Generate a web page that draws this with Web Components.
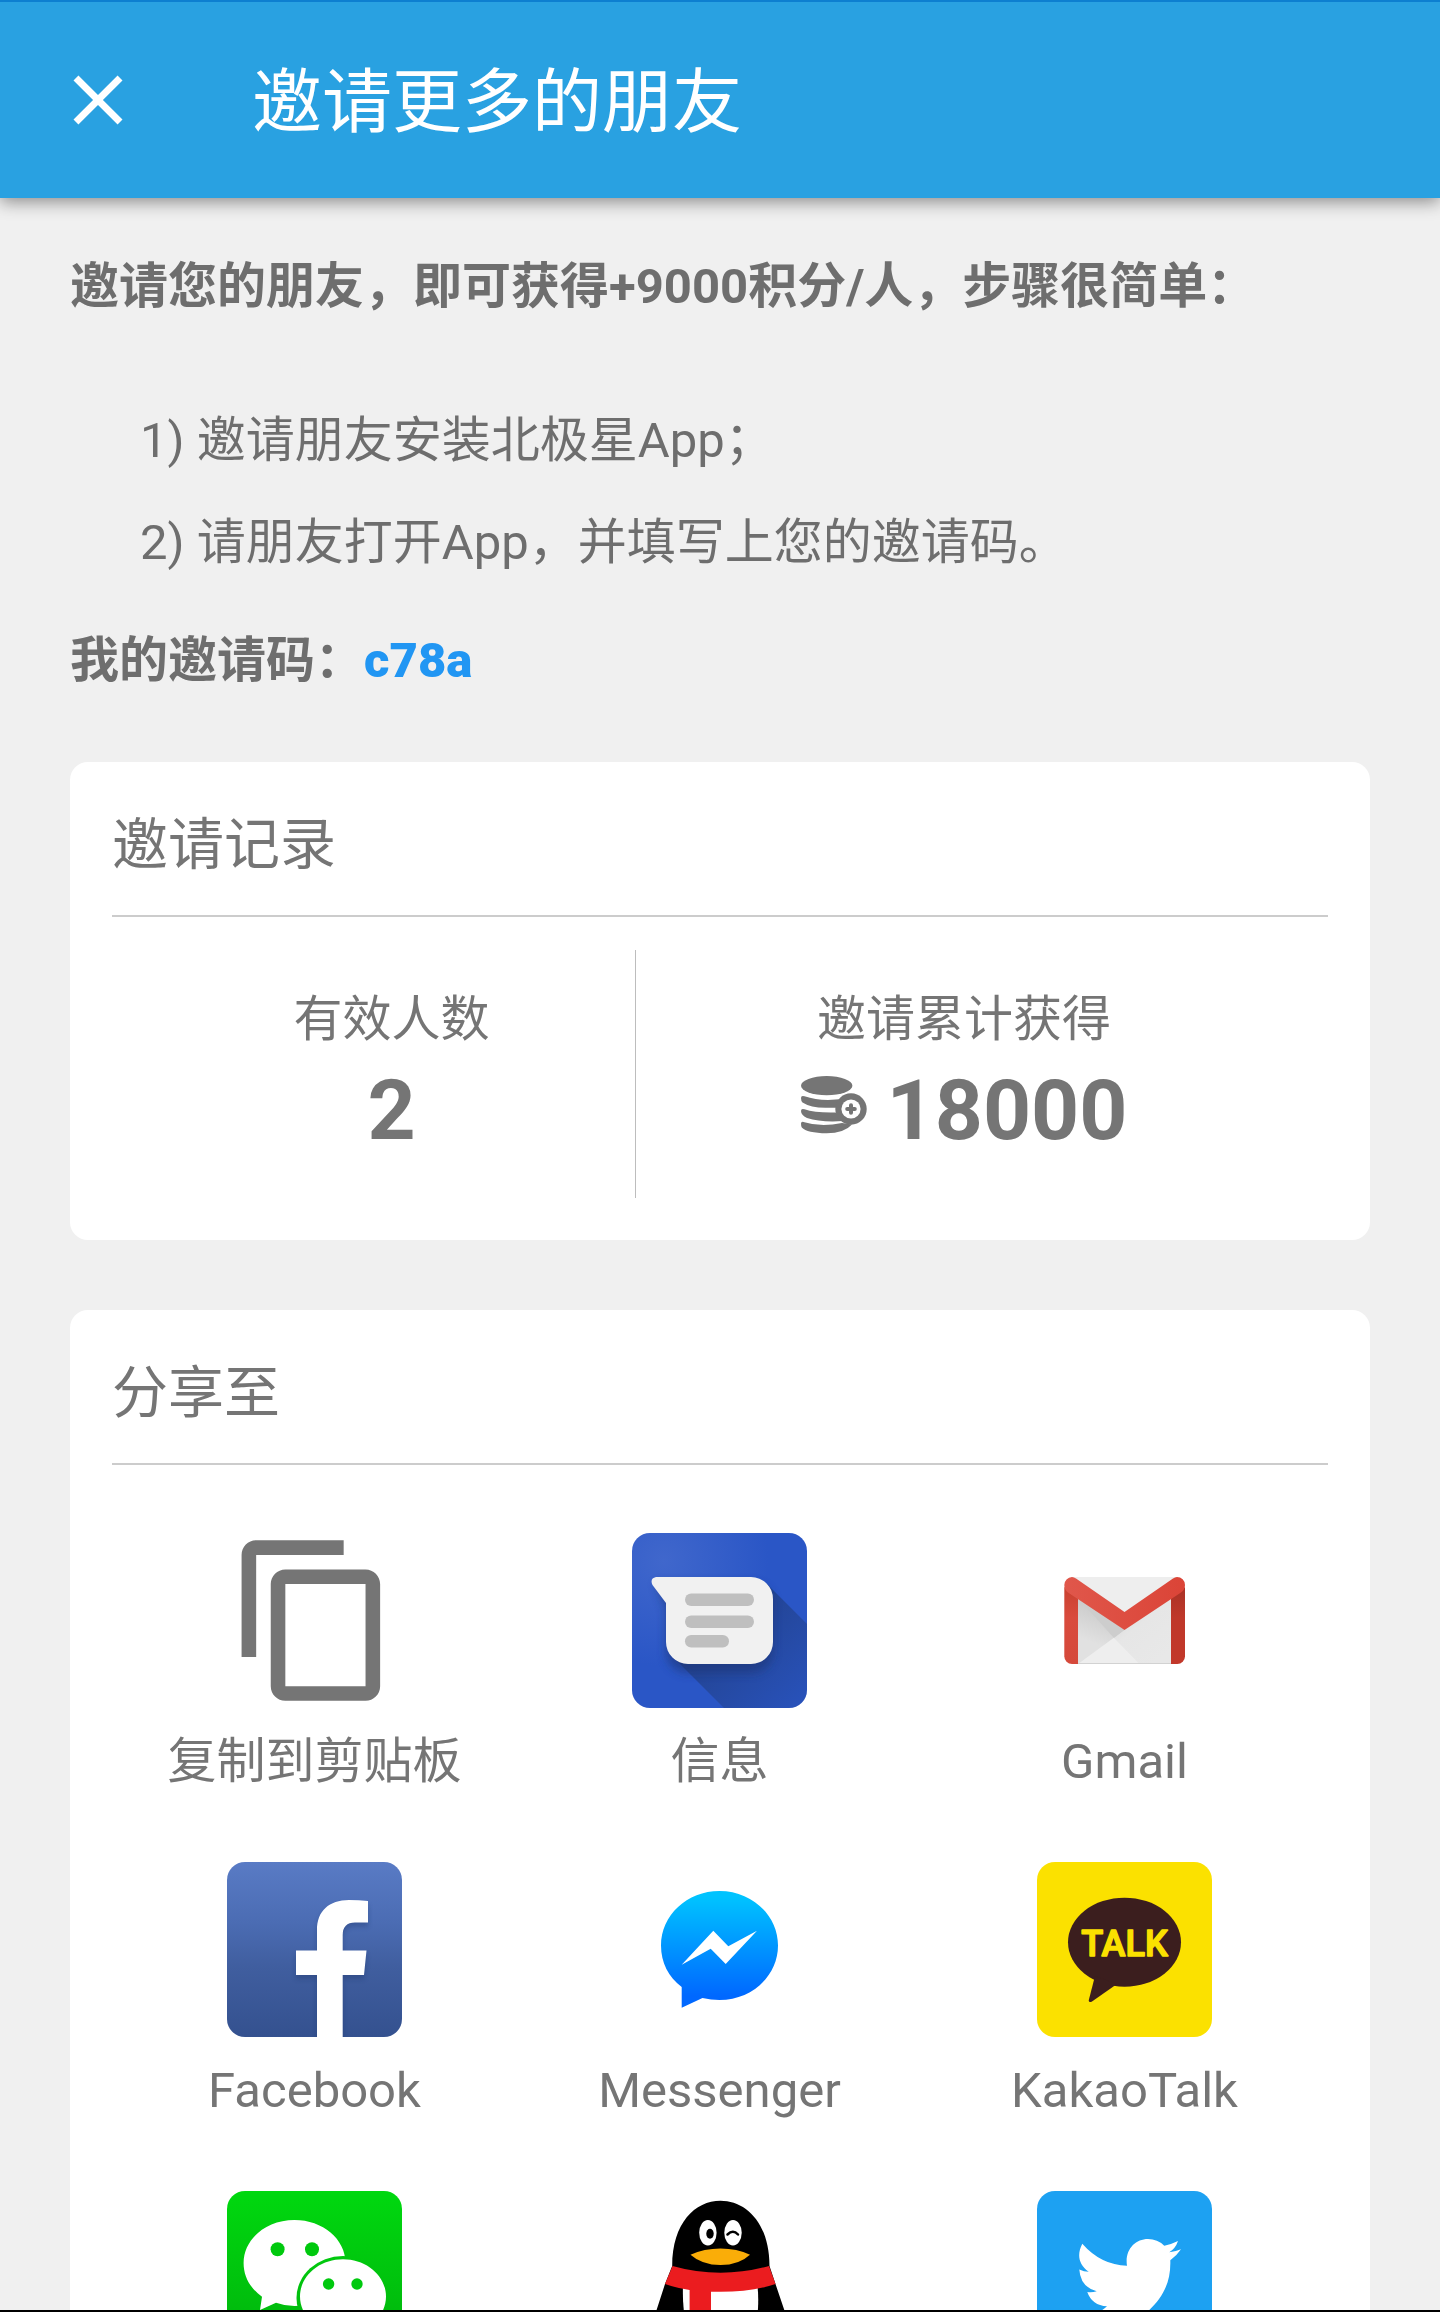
<!DOCTYPE html>
<html lang="zh-CN">
<head>
<meta charset="utf-8">
<meta name="viewport" content="width=device-width, initial-scale=1">
<title>邀请更多的朋友</title>
<style>
  :root {
    --bar: #29a1e1;
    --page: #f0f0f0;
    --text: #757575;
    --rule: #cccccc;
    --accent: #2196f3;
  }
  body {
    margin: 0;
    background: var(--page);
    color: var(--text);
    font-family: Roboto, "Noto Sans CJK SC", sans-serif;
    font-size: 49px;
    line-height: 58px;
  }
</style>
</head>
<body>
<invite-page>
  <app-bar slot="bar">邀请更多的朋友</app-bar>
  <invite-guide>
    <span slot="intro">邀请您的朋友，即可获得+9000积分/人，步骤很简单：</span>
    <span slot="step1">1) 邀请朋友安装北极星App；</span>
    <span slot="step2">2) 请朋友打开App，并填写上您的邀请码。</span>
    <span slot="label">我的邀请码：</span>
    <span slot="code">c78a</span>
  </invite-guide>
  <info-card>
    <span slot="title">邀请记录</span>
    <stat-row>
      <stat-item slot="first" label="有效人数">2</stat-item>
      <stat-item slot="second" label="邀请累计获得" coins>18000</stat-item>
    </stat-row>
  </info-card>
  <info-card>
    <span slot="title">分享至</span>
    <share-grid>
      <share-item icon="copy">复制到剪贴板</share-item>
      <share-item icon="messages">信息</share-item>
      <share-item icon="gmail">Gmail</share-item>
      <share-item icon="facebook">Facebook</share-item>
      <share-item icon="messenger">Messenger</share-item>
      <share-item icon="kakao">KakaoTalk</share-item>
      <share-item icon="wechat" name="微信"></share-item>
      <share-item icon="qq" name="QQ"></share-item>
      <share-item icon="twitter" name="Twitter"></share-item>
    </share-grid>
  </info-card>
</invite-page>

<script>
const define = (tag, render) => customElements.define(tag, class extends HTMLElement {
  constructor() {
    super();
    this.attachShadow({ mode: 'open' });
  }
  connectedCallback() {
    this.shadowRoot.innerHTML = render(this);
  }
});

const icons = {
  copy: `<svg viewBox="0 0 24 24"><path fill="#757575" d="M16 1H4c-1.1 0-2 .9-2 2v14h2V3h12V1zm3 4H8c-1.1 0-2 .9-2 2v14c0 1.100.9 2 2 2h11c1.100 0 2-.9 2-2V7c0-1.100-.9-2-2-2zm0 16H8V7h11v14z"/></svg>`,

  messages: `<svg viewBox="0 0 175 175">
    <defs>
      <radialGradient id="sky" cx=".18" cy=".16" r=".6"><stop offset="0" stop-color="#4067cc"/><stop offset="1" stop-color="#2a56c6"/></radialGradient>
      <linearGradient id="cast" x1="0" y1="0" x2="1" y2="1"><stop offset=".3" stop-color="#213f85" stop-opacity=".85"/><stop offset="1" stop-color="#213f85" stop-opacity=".15"/></linearGradient>
      <clipPath id="tile"><rect width="175" height="175" rx="18"/></clipPath>
      <filter id="soft" x="-20%" y="-20%" width="140%" height="150%"><feGaussianBlur stdDeviation="5"/></filter>
    </defs>
    <g clip-path="url(#tile)">
      <rect width="175" height="175" fill="url(#sky)"/>
      <path d="M135 51 175 91V175H92L41 124Z" fill="url(#cast)"/>
      <path d="M24 50H119a22 22 0 0 1 22 22v46a22 22 0 0 1-22 22H56a22 22 0 0 1-22-22V76Z" fill="#1b3576" opacity=".6" filter="url(#soft)"/>
      <path d="M24 44H119a22 22 0 0 1 22 22v43a22 22 0 0 1-22 22H56a22 22 0 0 1-22-22V70L20.500 52Q17.500 45.500 24 44Z" fill="#f1f1f1"/>
      <g fill="#bfbfbf"><rect x="53" y="60.500" width="69" height="12.500" rx="6.200"/><rect x="53" y="82.500" width="69" height="12.500" rx="6.200"/><rect x="53" y="102" width="44" height="12.500" rx="6.200"/></g>
    </g></svg>`,

  gmail: `<svg viewBox="0 0 175 175">
    <defs>
      <linearGradient id="left" x1="0" y1="0" x2="0" y2="1"><stop offset="0" stop-color="#c9402f"/><stop offset=".4" stop-color="#d94b3d"/><stop offset="1" stop-color="#d5493b"/></linearGradient>
      <linearGradient id="right" x1="0" y1="0" x2="0" y2="1"><stop offset="0" stop-color="#a93226"/><stop offset=".4" stop-color="#bf382a"/><stop offset="1" stop-color="#c2382a"/></linearGradient>
      <linearGradient id="flap" x1="0" y1="0" x2="1" y2="0"><stop offset="0" stop-color="#e0574b"/><stop offset="1" stop-color="#db4437"/></linearGradient>
      <linearGradient id="fold" x1=".6" y1="0" x2=".3" y2="1"><stop offset="0" stop-color="#c4c4c4"/><stop offset=".7" stop-color="#e1e1e1"/></linearGradient>
      <linearGradient id="shade" x1="0" y1="0" x2=".7" y2="1"><stop offset="0" stop-color="#d4d4d4"/><stop offset=".5" stop-color="#e6e6e6"/><stop offset="1" stop-color="#e8e8e8"/></linearGradient>
    </defs>
    <rect x="34" y="44" width="107" height="87" fill="#eeeeee"/>
    <path d="M41 65V131L87.500 97Z" fill="url(#fold)"/>
    <path d="M77 105 134 62V131H102.500Z" fill="url(#shade)"/>
    <path d="M41 65 77 105 87.500 97Z" fill="#cdcdcd"/>
    <path d="M41 130.500H134" stroke="#d2d2d2"/>
    <path d="M27.300 54 41 65V131H35a7.700 7.700 0 0 1-7.700-7.700Z" fill="url(#left)"/>
    <path d="M148 54 134 65V131h6.300a7.700 7.700 0 0 0 7.700-7.700Z" fill="url(#right)"/>
    <path d="M35 44Q37 44 39 45.500L87.500 79 136 45.500Q138 44 140 44A8 8 0 0 1 148 52Q148 56.500 144 59.500L87.500 97 31 59.500Q27.300 56.500 27.300 52A8 8 0 0 1 35 44Z" fill="url(#flap)"/>
  </svg>`,

  facebook: `<svg viewBox="0 0 175 175">
    <defs>
      <linearGradient id="blue" x1="0" y1="0" x2="0" y2="1"><stop offset="0" stop-color="#597bc5"/><stop offset=".35" stop-color="#4b6cb3"/><stop offset=".6" stop-color="#405e9f"/><stop offset="1" stop-color="#34518f"/></linearGradient>
      <clipPath id="tile"><rect width="175" height="175" rx="18"/></clipPath>
      <filter id="soft" x="-20%" y="-20%" width="140%" height="140%"><feGaussianBlur stdDeviation="2.500"/></filter>
    </defs>
    <g clip-path="url(#tile)">
      <rect width="175" height="175" fill="url(#blue)"/>
      <path transform="translate(0 4)" opacity=".35" filter="url(#soft)" fill="#1f3566" d="M90 175V113H69V88.500H90V68C90 49 102 38 122 38Q132 38 141 39.500V60.500H128Q115.700 60.500 115.700 73V88.500H139.500L137 113H115.700V175Z"/>
      <path fill="#fff" d="M90 175V113H69V88.500H90V68C90 49 102 38 122 38Q132 38 141 39V60.500H128Q115.700 60.500 115.700 73V88.500H139.500L137 113H115.700V175Z"/>
    </g></svg>`,

  messenger: `<svg viewBox="0 0 175 175">
    <defs><linearGradient id="deep" x1="0" y1="0" x2="0" y2="1"><stop offset=".05" stop-color="#00c3ff"/><stop offset=".9" stop-color="#0068ff"/></linearGradient></defs>
    <path fill="url(#deep)" d="M87.500 29C120 29 146 53.400 146 83.500S120 138 87.500 138Q79 138 70.500 136L49.700 145.700V125C36.500 115 29 100.500 29 83.500 29 53.400 55 29 87.500 29Z"/>
    <path fill="#fff" d="M49.700 102.700 81.300 68.700 96.300 84.300 125 68.700 93.700 102 78.700 86.700Z"/>
  </svg>`,

  kakao: `<svg viewBox="0 0 175 175">
    <rect width="175" height="175" rx="18" fill="#fbe100"/>
    <ellipse cx="87.500" cy="80.200" rx="56.500" ry="44.500" fill="#3b1e1e"/>
    <path fill="#3b1e1e" d="M58 114 51.700 138.500Q52 141 55 139.500L80 122Z"/>
    <text x="87.500" y="94" text-anchor="middle" font-family="Roboto, sans-serif" font-size="36" font-weight="500" fill="#fbe100" stroke="#fbe100" stroke-width="1.500" stroke-linejoin="round">TALK</text>
  </svg>`,

  wechat: `<svg viewBox="0 0 175 175">
    <defs>
      <linearGradient id="green" x1="0" y1="0" x2="0" y2="1"><stop offset="0" stop-color="#00d80f"/><stop offset="1" stop-color="#00b00c"/></linearGradient>
      <mask id="cut"><rect width="175" height="175" fill="#fff"/><ellipse cx="116" cy="107" rx="46.500" ry="42" fill="#000"/></mask>
    </defs>
    <rect width="175" height="175" rx="18" fill="url(#green)"/>
    <g mask="url(#cut)"><path fill="#fff" d="M67.500 29C95.700 29 118.500 48 118.500 72S95.700 115 67.500 115Q58 115 49 111.700L33 119 35 105.700C23 97 16.600 85.500 16.600 72 16.600 48 39.300 29 67.500 29Z"/></g>
    <path fill="#fff" d="M116 68.300C139.700 68.300 159 85 159 105.500 159 117 153 127 144 134L146 146 132 140Q124 142.500 116 142.500C92.300 142.500 73 126 73 105.500S92.300 68.300 116 68.300Z"/>
    <g fill="#00c90e"><circle cx="50.600" cy="58.300" r="7"/><circle cx="85" cy="58.300" r="7"/><circle cx="101.600" cy="93" r="5.700"/><circle cx="130" cy="93" r="5.700"/></g>
  </svg>`,

  qq: `<svg viewBox="0 0 175 175">
    <path d="M88.500 9.700C114 9.700 137.500 32 137.500 75L143.500 93 156 130C150 160 120 170 88.500 170S27 160 21 130L33 93 40.200 75C40.200 32 63 9.700 88.500 9.700Z"/>
    <path fill="#fff" d="M51 95H125.500Q128 118 122 145 88.500 165 56 145 50 118 51 95Z"/>
    <ellipse cx="75.900" cy="41.700" rx="8.700" ry="12.700" fill="#fff"/><ellipse cx="101" cy="41.700" rx="8.700" ry="12.700" fill="#fff"/>
    <ellipse cx="78" cy="42.800" rx="3.700" ry="5"/>
    <path d="M95.500 43.500Q101 38 106 43.500" fill="none" stroke="#000" stroke-width="2.500" stroke-linecap="round"/>
    <path fill="#faad08" d="M58.500 63.700Q72 57.500 88.500 57.500T118 63.700Q107 74 88.500 74T58.500 63.700Z"/>
    <path fill="#eb1c1f" d="M40.500 75Q88.500 88.500 137 75L143.500 93Q117 102 79 100.700V140H57.600V99Q44 97 33 93Z"/>
  </svg>`,

  twitter: `<svg viewBox="0 0 175 175">
    <rect width="175" height="175" rx="18" fill="#1da1f2"/>
    <path fill="#fff" d="M45.300 52.700Q64 74 90 74.700C87.500 59 98 48 111 48Q120.500 48 127.300 54.700 134 53.500 141 50 138.500 57.500 132.300 61.300 138 60.800 144 58.300 139.500 65 133.300 69.300C134 91 126 106 112.300 119 95 138 62 140 39 126.500Q56 127.500 70 115.300 55 114.500 50.300 101 55 101.700 59.700 100.300 43.500 96 42.300 78.500 47 80.700 51.700 80.700C41 73 40 63 45.300 52.700Z"/>
  </svg>`,

  coins: `<svg viewBox="0 0 66 58">
    <g fill="#757575">
      <ellipse cx="25.700" cy="9.700" rx="25.700" ry="9.600"/>
      <path d="M0 22Q0 19 3.500 20.300 14 24 27 24L42 23 40 31.700H26Q10 32 1.500 26.500 0 25 0 22Z"/>
      <path d="M0 35Q0 32 3.500 33.300 14 37 34.500 36.500L42 45Q20 46.500 6 42 0 39 0 35Z"/>
      <path d="M0 47.500Q0 45 3.500 46.200 20 51.500 41 47L51 48.500Q43 57.300 25.700 57.300 6 57 .8 51.500 0 50 0 47.500Z"/>
      <circle cx="50" cy="33" r="15.700"/>
    </g>
    <circle cx="50" cy="33" r="9.600" fill="#fff"/>
    <path d="M50 29.200V36.800M46.200 33H53.800" stroke="#757575" stroke-width="4" stroke-linecap="round"/>
  </svg>`
};

define('invite-page', () => `
  <style>
    :host { display: flex; flex-direction: column; height: 100vh; overflow: hidden; }
    main { flex: 1; min-height: 0; overflow-y: auto; scrollbar-width: none; box-sizing: border-box; padding: 60px 70px 0; display: flex; flex-direction: column; gap: 70px; }
    ::slotted(*) { flex-shrink: 0; }
    footer { height: 2px; background: #000; }
  </style>
  <slot name="bar"></slot>
  <main><slot></slot></main>
  <footer></footer>`);

define('app-bar', () => `
  <style>
    :host { display: block; position: relative; z-index: 1; background: var(--bar); border-top: 2px solid #0d7fd0; color: #fff; box-shadow: 0 4px 16px rgba(0,0,0,.42); }
    header { display: flex; align-items: center; gap: 112px; height: 196px; padding-left: 56px; }
    button { display: block; width: 84px; height: 84px; padding: 0; border: 0; background: none; color: inherit; cursor: pointer; }
    svg { display: block; width: 84px; height: 84px; }
    h1 { margin: 0; padding-top: 6px; font-size: 70px; line-height: 84px; font-weight: 400; }
  </style>
  <header>
    <button type="button" aria-label="关闭"><svg viewBox="0 0 24 24"><path fill="currentColor" d="M19 6.410 17.590 5 12 10.590 6.410 5 5 6.410 10.590 12 5 17.590 6.410 19 12 13.410 17.590 19 19 17.590 13.410 12z"/></svg></button>
    <h1><slot></slot></h1>
  </header>`);

define('invite-guide', () => `
  <style>
    :host { display: block; padding-bottom: 2px; color: #6e6e6e; }
    p { margin: 0; font-weight: 700; }
    ol { list-style: none; margin: 96px 0 60px; padding: 0 0 0 70px; display: flex; flex-direction: column; gap: 44px; }
    b { color: var(--accent); }
  </style>
  <p><slot name="intro"></slot></p>
  <ol><li><slot name="step1"></slot></li><li><slot name="step2"></slot></li></ol>
  <p><slot name="label"></slot><b><slot name="code"></slot></b></p>`);

define('info-card', () => `
  <style>
    :host { display: block; background: #fff; border-radius: 18px; padding: 50px 42px 42px; }
    h2 { margin: 0; padding-bottom: 37px; border-bottom: 2px solid var(--rule); font-size: 56px; line-height: 66px; font-weight: 400; }
  </style>
  <h2><slot name="title"></slot></h2>
  <slot></slot>`);

define('stat-row', () => `
  <style>
    :host { display: grid; grid-template-columns: 43fr 58fr; margin-top: 33px; padding: 0 36px; }
    div { padding: 41px 0 37px; }
    div + div { border-left: 1px solid #bdbdbd; }
  </style>
  <div><slot name="first"></slot></div>
  <div><slot name="second"></slot></div>`);

define('stat-item', el => `
  <style>
    :host { display: flex; flex-direction: column; align-items: center; gap: 12px; }
    strong { display: flex; align-items: center; gap: 20px; font-size: 84px; line-height: 100px; font-weight: 700; }
    svg { display: block; width: 66px; height: 58px; margin-bottom: 12px; }
  </style>
  <span>${el.getAttribute('label')}</span>
  <strong>${el.hasAttribute('coins') ? icons.coins : ''}<span><slot></slot></span></strong>`);

define('share-grid', () => `
  <style>
    :host { display: grid; grid-template-columns: repeat(3, 1fr); row-gap: 71px; margin-top: 68px; padding-right: 1px; }
  </style>
  <slot></slot>`);

define('share-item', el => `
  <style>
    :host { display: block; }
    button { display: flex; flex-direction: column; align-items: center; gap: 25px; width: 100%; padding: 0; border: 0; background: none; color: inherit; font: inherit; cursor: pointer; }
    svg { display: block; width: 175px; height: 175px; }
  </style>
  <button type="button"${el.hasAttribute('name') ? ` aria-label="${el.getAttribute('name')}"` : ''}>${icons[el.getAttribute('icon')]}<span><slot></slot></span></button>`);
</script>
</body>
</html>
